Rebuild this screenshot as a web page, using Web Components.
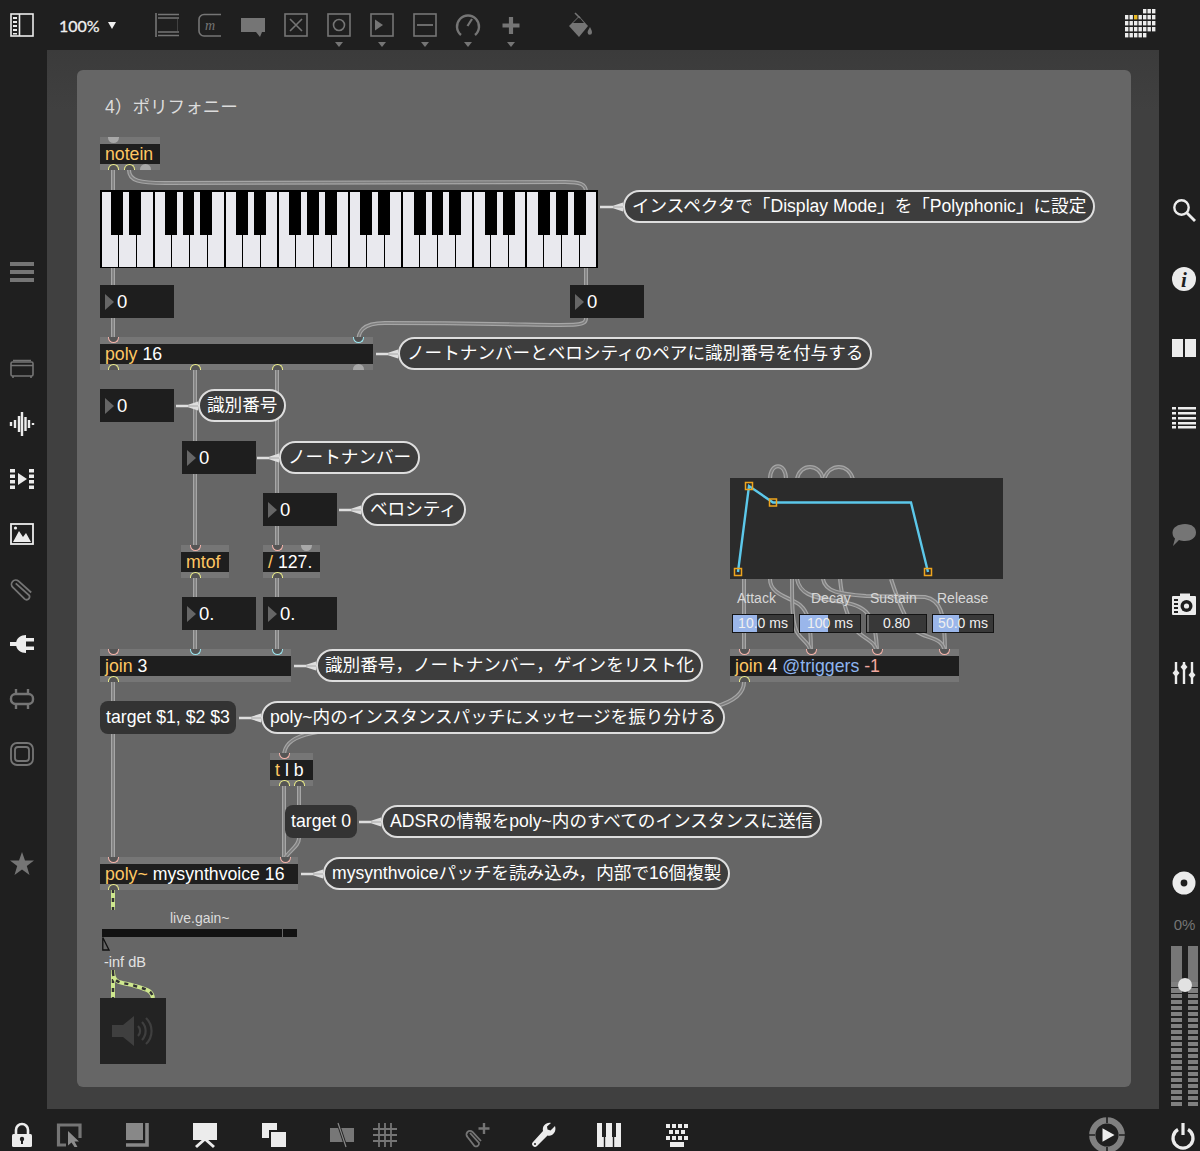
<!DOCTYPE html>
<html lang="ja">
<head>
<meta charset="utf-8">
<title>poly~</title>
<style>
  html, body { margin: 0; padding: 0; background: #1f1f1f; }
  body { font-family: "Liberation Sans", "Noto Sans CJK JP", sans-serif; }
  .attr { color: #8fb6f0; }
  .num { color: #f2a9a0; }
</style>
</head>
<body>

<max-window>
  <tool-strip slot="top" side="top">
    <max-icon name="sidebar" tint="w"></max-icon>
    <zoom-menu value="100%"></zoom-menu>
    <max-icon name="newobj"></max-icon>
    <max-icon name="message"></max-icon>
    <max-icon name="comment"></max-icon>
    <max-icon name="toggle"></max-icon>
    <max-icon name="button" caret></max-icon>
    <max-icon name="number" caret></max-icon>
    <max-icon name="slider" caret></max-icon>
    <max-icon name="dial" caret></max-icon>
    <max-icon name="plus" caret></max-icon>
    <max-icon name="bucket" style="margin-left:26px"></max-icon>
    <max-icon name="gridmap" size="32" tint="w" style="margin-left:auto"></max-icon>
  </tool-strip>

  <tool-strip slot="left" side="left">
    <max-icon name="menu"></max-icon>
    <max-icon name="rack" style="margin-top:42px"></max-icon>
    <max-icon name="wave" tint="w"></max-icon>
    <max-icon name="film" tint="w"></max-icon>
    <max-icon name="image" tint="w"></max-icon>
    <max-icon name="clip"></max-icon>
    <max-icon name="plug" tint="w"></max-icon>
    <max-icon name="bridge"></max-icon>
    <max-icon name="frame"></max-icon>
    <max-icon name="star" style="margin-top:55px"></max-icon>
  </tool-strip>

  <patch-canvas slot="main">
    <patch-wires></patch-wires>

    <patch-label x="105" y="97" size="17.6" color="#dcdcdc">4）ポリフォニー</patch-label>

    <patch-obj x="100" y="137" w="60" name="notein" top="13:g" out="13:y 29:y 45:g"></patch-obj>
    <kbd-slider x="100" y="190" w="498" h="78"></kbd-slider>
    <note-bubble x="600" y="190" tail="23">インスペクタで「Display Mode」を「Polyphonic」に設定</note-bubble>

    <num-box x="100" y="285" value="0"></num-box>
    <num-box x="570" y="285" value="0"></num-box>

    <patch-obj x="100" y="337" w="273" name="poly" top="13:p 258:c" out="13:y 95:y 177:y 258:g">16</patch-obj>
    <note-bubble x="376" y="337" tail="22">ノートナンバーとベロシティのペアに識別番号を付与する</note-bubble>

    <num-box x="100" y="389" value="0"></num-box>
    <note-bubble x="176" y="389" tail="22">識別番号</note-bubble>
    <num-box x="182" y="441" value="0"></num-box>
    <note-bubble x="257" y="441" tail="22">ノートナンバー</note-bubble>
    <num-box x="263" y="493" value="0"></num-box>
    <note-bubble x="339" y="493" tail="22">ベロシティ</note-bubble>

    <patch-obj x="181" y="545" w="48" name="mtof" top="14:p" out="14:y"></patch-obj>
    <patch-obj x="263" y="545" w="57" name="/" top="14:p 43:g" out="14:y">127.</patch-obj>
    <num-box x="182" y="597" value="0."></num-box>
    <num-box x="263" y="597" value="0."></num-box>

    <patch-obj x="100" y="649" w="191" name="join" top="13:p 95:c 177:c" out="13:y">3</patch-obj>
    <note-bubble x="294" y="649" tail="22">識別番号，ノートナンバー，ゲインをリスト化</note-bubble>

    <msg-box x="100" y="701">target $1, $2 $3</msg-box>
    <note-bubble x="239" y="701" tail="22">poly~内のインスタンスパッチにメッセージを振り分ける</note-bubble>

    <patch-obj x="270" y="753" w="43" name="t" top="14:p" out="14:y 29:y">l b</patch-obj>
    <msg-box x="285" y="805">target 0</msg-box>
    <note-bubble x="359" y="805" tail="22">ADSRの情報をpoly~内のすべてのインスタンスに送信</note-bubble>

    <patch-obj x="100" y="857" w="198" name="poly~" top="13:p 185:p" out="13:y">mysynthvoice 16</patch-obj>
    <note-bubble x="301" y="857" tail="22">mysynthvoiceパッチを読み込み，内部で16個複製</note-bubble>

    <adsr-panel x="730" y="478"></adsr-panel>
    <patch-label x="737" y="588" size="14" color="#d8d8d8">Attack</patch-label>
    <patch-label x="811" y="588" size="14" color="#d8d8d8">Decay</patch-label>
    <patch-label x="870" y="588" size="14" color="#d8d8d8">Sustain</patch-label>
    <patch-label x="937" y="588" size="14" color="#d8d8d8">Release</patch-label>
    <live-num x="732" y="614" w="62" fill="24" value="10.0 ms"></live-num>
    <live-num x="799" y="614" w="62" fill="28" value="100 ms"></live-num>
    <live-num x="866" y="614" w="61" fill="2" value="0.80" plain></live-num>
    <live-num x="932" y="614" w="62" fill="26" value="50.0 ms"></live-num>
    <patch-obj x="730" y="649" w="229" name="join" top="14:p 81:p 147:p 214:p" out="14:y">4 <span class="attr">@triggers</span> <span class="num">-1</span></patch-obj>

    <patch-label x="170" y="908" size="14" color="#dcdcdc">live.gain~</patch-label>
    <live-gain x="102" y="929"></live-gain>
    <patch-label x="104" y="952" size="14.5" color="#e2e2e2">-inf dB</patch-label>
    <ez-dac x="100" y="998"></ez-dac>
  </patch-canvas>

  <tool-strip slot="right" side="right">
    <max-icon name="search" tint="w"></max-icon>
    <max-icon name="info" tint="w"></max-icon>
    <max-icon name="book" tint="w"></max-icon>
    <max-icon name="list" tint="w"></max-icon>
    <max-icon name="bubble" style="margin-top:49px"></max-icon>
    <max-icon name="camera" tint="w"></max-icon>
    <max-icon name="sliders" tint="w"></max-icon>
    <max-icon name="disc" tint="w" style="margin-top:141px"></max-icon>
    <audio-meter value="0%"></audio-meter>
  </tool-strip>

  <tool-strip slot="bottom" side="bottom">
    <max-icon name="lock" tint="w"></max-icon>
    <max-icon name="cursor" style="margin-left:23px"></max-icon>
    <max-icon name="layer" style="margin-left:44px"></max-icon>
    <max-icon name="present" tint="w" style="margin-left:44px"></max-icon>
    <max-icon name="windows" tint="w" style="margin-left:45px"></max-icon>
    <max-icon name="crossed" style="margin-left:44px"></max-icon>
    <max-icon name="grid" style="margin-left:19px"></max-icon>
    <max-icon name="clipadd" style="margin-left:69px"></max-icon>
    <max-icon name="wrench" tint="w" style="margin-left:42px"></max-icon>
    <max-icon name="piano" tint="w" style="margin-left:41px"></max-icon>
    <max-icon name="keys" tint="w" style="margin-left:44px"></max-icon>
    <max-icon name="transport" size="36" style="margin-left:400px;margin-top:-6px"></max-icon>
    <max-icon name="power" tint="w" style="margin-left:46px"></max-icon>
  </tool-strip>
</max-window>

<script>
// page coordinates of the patcher card, nodes are written in page coordinates
const CARD_X = 77;
const CARD_Y = 70;

const ICONS = {
  sidebar: `<rect x="1" y="1" width="22" height="22" fill="none" stroke="currentColor" stroke-width="1.6"/><path d="M9.5 1V23" stroke="currentColor" stroke-width="1.6"/><path d="M3 4h4v2H3zM3 8h4v2H3zM3 12h4v2H3zM3 16h4v2H3zM3 20h4v1.5H3z" fill="currentColor"/>`,
  newobj: `<path d="M1 0V24" stroke="currentColor" stroke-width="1.6"/><path d="M3 1.5H24M3 5H24M3 19H24M3 22.5H24" stroke="currentColor" stroke-width="1.6"/><path d="M22.5 6V18" stroke="currentColor" stroke-opacity=".4"/>`,
  message: `<path d="M23 1.5H6a5 5 0 0 0-5 5V18a5 5 0 0 0 5 5H23" fill="none" stroke="currentColor" stroke-width="1.6"/><text x="7" y="17" font-family="Liberation Serif" font-style="italic" font-size="14" fill="currentColor">m</text>`,
  comment: `<path d="M0 5H24V19H21L19 24L15 19H0Z" fill="currentColor"/>`,
  toggle: `<rect x="1" y="1" width="22" height="22" fill="none" stroke="currentColor" stroke-width="1.6"/><path d="M6 6L18 18M18 6L6 18" stroke="currentColor" stroke-width="1.6"/>`,
  button: `<rect x="1" y="1" width="22" height="22" fill="none" stroke="currentColor" stroke-width="1.6"/><circle cx="12" cy="12" r="5.5" fill="none" stroke="currentColor" stroke-width="1.6"/>`,
  number: `<rect x="1" y="1" width="22" height="22" fill="none" stroke="currentColor" stroke-width="1.6"/><path d="M5 6.5L13 12L5 17.5Z" fill="currentColor"/>`,
  slider: `<rect x="1" y="1" width="22" height="22" fill="none" stroke="currentColor" stroke-width="1.6"/><path d="M4 12H20" stroke="currentColor" stroke-width="1.8"/>`,
  dial: `<path d="M5 22A11 11 0 1 1 19 22" fill="none" stroke="currentColor" stroke-width="2.4"/><path d="M11.5 13L16 6" stroke="currentColor" stroke-width="2.2"/>`,
  plus: `<path d="M12 4V21M3.5 12.5H20.5" stroke="currentColor" stroke-width="4.2"/>`,
  bucket: `<path d="M1 13L11 3L20 13L11 24Z" fill="currentColor"/><path d="M5 10L11 4L16 10Z" fill="#1f1f1f"/><path d="M7 0L12 5" stroke="currentColor" stroke-width="1.6"/><path d="M22 14c1.5 3 2 4 2 5.5a2.2 2.2 0 0 1-4.4 0c0-1.5.8-2.5 2.4-5.5Z" fill="currentColor"/>`,
  gridmap: gridDots(),
  menu: `<path d="M0 2H24V6H0ZM0 10H24V14H0ZM0 18H24V22H0Z" fill="currentColor"/>`,
  rack: `<rect x="1" y="5" width="22" height="14" rx="1.5" fill="none" stroke="currentColor" stroke-width="1.6"/><path d="M1 8.5H23M3 3.5H21M3 21V19M21 21V19" stroke="currentColor" stroke-width="1.6"/>`,
  wave: `<path d="M1 10v4M5 8v8M9 4v16M12 0v24M15.5 5v14M19 8v8M23 11v2" stroke="currentColor" stroke-width="2.4"/>`,
  film: `<path d="M0 2h5v3.4H0zM0 7.5h5v3.4H0zM0 13h5v3.4H0zM0 18.5h5v3.4H0zM19 2h5v3.4h-5zM19 7.5h5v3.4h-5zM19 13h5v3.4h-5zM19 18.5h5v3.4h-5z" fill="currentColor"/><path d="M8 6L17 12L8 18Z" fill="currentColor"/>`,
  image: `<rect x="1" y="2" width="22" height="20" fill="none" stroke="currentColor" stroke-width="1.8"/><circle cx="5.5" cy="6" r="1.6" fill="currentColor"/><path d="M3 20L9 9L13 15L16 11L21 20Z" fill="currentColor"/>`,
  clip: `<path d="M6 6L19 19a3 3 0 0 1-5 3L3 10a4 4 0 0 1 6-6L21 16" transform="rotate(-3 12 12)" fill="none" stroke="currentColor" stroke-width="1.8"/>`,
  plug: `<path d="M0 10H7V14H0Z M6 12C6 6 11 3 16 3V21C11 21 6 18 6 12Z M16 6H24V9.5H16Z M16 14.5H24V18H16Z" fill="currentColor"/>`,
  bridge: `<rect x="1" y="7" width="22" height="10" rx="4.5" fill="none" stroke="currentColor" stroke-width="2.4"/><path d="M6 2V7M18 2V7M6 17V22M18 17V22" stroke="currentColor" stroke-width="2.4"/>`,
  frame: `<rect x="1" y="1" width="22" height="22" rx="6" fill="none" stroke="currentColor" stroke-width="1.8"/><rect x="5" y="5" width="14" height="14" rx="3" fill="none" stroke="currentColor" stroke-width="1.8"/>`,
  star: `<path d="M12 0L15 8.5H24L16.8 14L19.5 23L12 17.5L4.5 23L7.2 14L0 8.5H9Z" fill="currentColor"/>`,
  search: `<circle cx="9.5" cy="9.5" r="7.2" fill="none" stroke="currentColor" stroke-width="2.4"/><path d="M15 15L23 23" stroke="currentColor" stroke-width="2.8"/>`,
  info: `<circle cx="12" cy="12" r="12" fill="currentColor"/><text x="12" y="19.5" text-anchor="middle" font-family="Liberation Serif" font-style="italic" font-weight="700" font-size="21" fill="#1f1f1f">i</text>`,
  book: `<path d="M0 3H11V21H0ZM13 3H24V21H13Z" fill="currentColor"/>`,
  list: `<path d="M0 2h4v2.5H0zM0 7h4v2.5H0zM0 12h4v2.5H0zM0 17h4v2.5H0zM0 21h4v2.5H0zM6 2h18v2.5H6zM6 7h18v2.5H6zM6 12h18v2.5H6zM6 17h18v2.5H6zM6 21h18v2.5H6z" fill="currentColor"/>`,
  bubble: `<path d="M13 1C20 1 24 4.5 24 9.5C24 15 19 18 13 18C11 18 9 17.8 7 17L1 23L3 15.5C1 14 .5 11.5 .5 9.5C.5 4.5 6 1 13 1Z" fill="currentColor"/>`,
  camera: `<path d="M5 4H8V1.5H18V4H23a1 1 0 0 1 1 1V22a1 1 0 0 1-1 1H1a1 1 0 0 1-1-1V5a1 1 0 0 1 1-1Z" fill="currentColor"/><circle cx="14.5" cy="14" r="6" fill="#1f1f1f"/><circle cx="14.5" cy="14" r="2.6" fill="currentColor"/><path d="M2 7h4v2H2zM2 11h4v2H2zM2 15h4v2H2zM2 19h4v2H2z" fill="#1f1f1f"/>`,
  sliders: `<path d="M4 1V23M12 1V23M20 1V23" stroke="currentColor" stroke-width="2.4"/><path d="M4 8L7.5 12L4 16L.5 12ZM12 2L15.5 6L12 10L8.5 6ZM20 10L23.5 14L20 18L16.5 14Z" fill="currentColor"/>`,
  disc: `<circle cx="12" cy="12" r="11.5" fill="currentColor"/><circle cx="12" cy="12" r="3.4" fill="#1f1f1f"/>`,
  lock: `<path d="M6 11V7a6 6 0 0 1 12 0v4" fill="none" stroke="currentColor" stroke-width="2.6"/><rect x="2" y="11" width="20" height="13" rx="1.5" fill="currentColor"/><circle cx="12" cy="16" r="2.2" fill="#1f1f1f"/><path d="M11 17H13V21H11Z" fill="#1f1f1f"/>`,
  cursor: `<path d="M23 15V2H1.5V22H9" fill="none" stroke="currentColor" stroke-width="3.2"/><path d="M11 8L22 18.5H17.5L20.5 24H17.5L14.5 19.5L11 22.5Z" fill="#8c8c8c"/>`,
  layer: `<path d="M1 0H18V17H1Z" fill="#888"/><path d="M22 0V22H1" fill="none" stroke="#888" stroke-width="3.6"/>`,
  present: `<path d="M0 0H24V17H0Z" fill="currentColor"/><path d="M12 16L3 24M12 16L21 24" stroke="currentColor" stroke-width="3"/>`,
  windows: `<rect x="0" y="0" width="15" height="15" fill="currentColor"/><rect x="7" y="7" width="17" height="17" fill="#1f1f1f"/><rect x="9" y="9" width="15" height="15" fill="currentColor"/>`,
  crossed: `<path d="M0 5H24V19H0Z" fill="#777"/><path d="M8 0L16 24" stroke="#1f1f1f" stroke-width="3"/><path d="M8 0L16 24" stroke="#888" stroke-width="1.2"/>`,
  grid: `<path d="M6 0V24M12 0V24M18 0V24M0 6H24M0 12H24M0 18H24" stroke="currentColor" stroke-width="1.8"/>`,
  clipadd: `<path d="M4 10L13 20a3 3 0 0 1-4.5 3L1.5 14a3.5 3.5 0 0 1 5-5L15 18" fill="none" stroke="currentColor" stroke-width="1.8"/><path d="M18 0V11M12.5 5.5H23.5" stroke="currentColor" stroke-width="2.4"/>`,
  wrench: `<path d="M23 3L18.5 7.5L15.5 6.5L15 3.5L19 0C14 -1 10 3 11 8L1 19a2.8 2.8 0 0 0 4 4L15.5 12.5C20 14 25 9 23 3Z" fill="currentColor"/><circle cx="3" cy="21" r="1" fill="#1f1f1f"/>`,
  piano: `<path d="M0 0H24V24H0Z" fill="currentColor"/><path d="M5 0H9V14H5ZM15 0H19V14H15Z" fill="#1f1f1f"/><path d="M7.5 14V24M16.5 14V24" stroke="#1f1f1f" stroke-width="1.4"/>`,
  keys: `<path d="M1 1h4v4H1zM7 1h4v4H7zM13 1h4v4h-4zM19 1h4v4h-4zM4 7h4v4H4zM10 7h4v4h-4zM16 7h4v4h-4zM1 13h4v4H1zM7 13h4v4H7zM13 13h4v4h-4zM19 13h4v4h-4zM5 19h14v5H5z" fill="currentColor"/>`,
  transport: `<circle cx="12" cy="12" r="9.8" fill="none" stroke="#808080" stroke-width="4.2"/><path d="M12 0V4M12 20V24M0 12H4M20 12H24" stroke="#1f1f1f" stroke-width="1.1"/><path d="M9 7.5L17 12L9 16.5Z" fill="#eee"/>`,
  power: `<path d="M7 6.5a10 10 0 1 0 10 0" fill="none" stroke="currentColor" stroke-width="3.2"/><path d="M12 0V12" stroke="currentColor" stroke-width="3.2"/>`
};

// the mixer style dots in the top right corner, one of them is yellow
function gridDots() {
  const rows = [[4, 7], [0, 7], [0, 7], [0, 7], [0, 5]];
  let out = "";
  rows.forEach((r, row) => {
    for (let c = r[0]; c < r[1]; c++) {
      const yellow = row === 1 && c === 2;
      out += `<rect x="${c * 4.5}" y="${row * 6}" width="3.4" height="4.4" fill="${yellow ? "#e8b820" : "currentColor"}"/>`;
    }
  });
  return out;
}

class MaxWindow extends HTMLElement {
  constructor() {
    super();
    this.shadowDOM = this.attachShadow({mode: "open"});
  }
  connectedCallback() {
    this.shadowDOM.innerHTML = `
    <style>
      :host {
        display: grid;
        grid-template-columns: 47px 1112px 41px;
        grid-template-rows: 50px 1059px 42px;
        grid-template-areas: "top top top" "left main right" "bottom bottom bottom";
        width: 1200px;
        height: 1151px;
        background: #1f1f1f;
        overflow: hidden;
      }
      ::slotted([slot="top"]) { grid-area: top; }
      ::slotted([slot="left"]) { grid-area: left; }
      ::slotted([slot="main"]) { grid-area: main; }
      ::slotted([slot="right"]) { grid-area: right; }
      ::slotted([slot="bottom"]) { grid-area: bottom; }
    </style>
    <slot name="top"></slot>
    <slot name="left"></slot>
    <slot name="main"></slot>
    <slot name="right"></slot>
    <slot name="bottom"></slot>
    `;
  }
}

class ToolStrip extends HTMLElement {
  constructor() {
    super();
    this.shadowDOM = this.attachShadow({mode: "open"});
  }
  connectedCallback() {
    this.shadowDOM.innerHTML = `
    <style>
      :host {
        display: flex;
        box-sizing: border-box;
        height: 100%;
      }
      :host([side="top"]) { align-items: center; gap: 19px; padding: 0 43px 0 10px; }
      :host([side="left"]) { flex-direction: column; gap: 31px; padding: 210px 0 0 10px; }
      :host([side="right"]) { flex-direction: column; gap: 45px; padding: 148px 0 0 13px; }
      :host([side="bottom"]) { padding: 14px 0 0 10px; align-items: flex-start; }
    </style>
    <slot></slot>
    `;
  }
}

class MaxIcon extends HTMLElement {
  constructor() {
    super();
    this.shadowDOM = this.attachShadow({mode: "open"});
  }
  connectedCallback() {
    const size = this.getAttribute("size") || 24;
    const box = this.getAttribute("name") === "gridmap" ? "0 0 32 32" : "0 0 24 24";
    const color = this.getAttribute("tint") === "w" ? "#ececec" : "#757575";
    this.shadowDOM.innerHTML = `
    <style>
      :host {
        display: block;
        position: relative;
        flex: none;
        width: ${size}px;
        height: ${size}px;
        color: ${color};
      }
      svg { display: block; overflow: visible; }
      .caret {
        position: absolute;
        left: 7.5px;
        top: 28.5px;
        width: 0;
        height: 0;
        border: 4.5px solid transparent;
        border-bottom: 0;
        border-top: 5px solid #757575;
      }
    </style>
    <svg width="${size}" height="${size}" viewBox="${box}">${ICONS[this.getAttribute("name")]}</svg>
    ${this.hasAttribute("caret") ? '<div class="caret"></div>' : ""}
    `;
  }
}

class ZoomMenu extends HTMLElement {
  constructor() {
    super();
    this.shadowDOM = this.attachShadow({mode: "open"});
  }
  connectedCallback() {
    this.shadowDOM.innerHTML = `
    <style>
      :host {
        display: flex;
        align-items: center;
        gap: 8px;
        width: 77px;
        margin-left: 6px;
        color: #f0f0f0;
        font: 16px "Lato", "Liberation Sans", sans-serif;
        -webkit-text-stroke: .3px #f0f0f0;
      }
      i { width: 0; height: 0; border: 4.5px solid transparent; border-bottom: 0; border-top: 7px solid #f0f0f0; }
    </style>
    <span>${this.getAttribute("value")}</span><i></i>
    `;
  }
}

class PatchCanvas extends HTMLElement {
  constructor() {
    super();
    this.shadowDOM = this.attachShadow({mode: "open"});
  }
  connectedCallback() {
    this.shadowDOM.innerHTML = `
    <style>
      :host {
        display: block;
        box-sizing: border-box;
        height: 100%;
        padding: 20px 28px 22px 30px;
        background: linear-gradient(#3b3b3b, #404040 60px);
      }
      .card {
        position: relative;
        height: 100%;
        background: #666;
        border-radius: 6px;
        font: 17.7px "Liberation Sans", "Noto Sans CJK JP", sans-serif;
        color: #fff;
      }
    </style>
    <div class="card"><slot></slot></div>
    `;
  }
}

// wires sit below every object of the patch
class PatchWires extends HTMLElement {
  constructor() {
    super();
    this.shadowDOM = this.attachShadow({mode: "open"});
  }
  connectedCallback() {
    const wires = [
      "M113 170V343",
      "M129 170C129 181 140 183 165 183L565 182C580 182 586 184 586 192V285",
      "M586 318C586 330 570 323 385 323C362 323 358 332 358 343",
      "M195 370V551", "M195 578V655",
      "M277 370V551", "M277 578V655",
      "M113 682V863",
      "M744 682C744 706 700 712 650 716L380 726C310 730 284 735 284 756",
      "M284 786V863", "M299 786V805", "M299 838C299 846 290 850 285 858",
      "M744 579V655",
      "M770 479C770 462 786 462 786 479", "M797 479C800 463 820 463 823 479", "M824 479C830 463 848 463 853 479",
      "M770 579C770 595 790 597 800 605C808 612 811 620 811 655",
      "M792 579C792 600 792 620 796 630C800 640 811 642 811 655",
      "M797 579C800 595 815 597 830 600C860 605 877 605 877 655",
      "M840 579C842 600 848 620 856 630C864 640 877 640 877 655",
      "M823 579C825 592 840 594 866 596L925 597C940 600 945 610 945 655",
      "M891 579C898 600 905 620 915 630C925 640 945 635 945 655"
    ];
    const signals = [
      "M113 889V910",
      "M113 970V998",
      "M113 972C113 985 125 982 135 986C150 990 152 992 153 998"
    ];
    const strand = (d, css) => `<path d="${d}" style="${css}"/>`;
    this.shadowDOM.innerHTML = `
    <style>
      :host { position: absolute; inset: 0; display: block; }
      svg { display: block; width: 100%; height: 100%; }
      path { fill: none; }
    </style>
    <svg viewBox="${CARD_X} ${CARD_Y} 1054 1017">
      ${wires.map(d => strand(d, "stroke:#a6a6a6;stroke-width:4") + strand(d, "stroke:#7d7d7d;stroke-width:1.6")).join("")}
      ${signals.map(d => strand(d, "stroke:#cfe88e;stroke-width:4") + strand(d, "stroke:#333;stroke-width:2.5;stroke-dasharray:4 5")).join("")}
    </svg>
    `;
  }
}

// base of everything placed on the free canvas of the patch
class PatchNode extends HTMLElement {
  constructor() {
    super();
    this.shadowDOM = this.attachShadow({mode: "open"});
  }
  connectedCallback() {
    this.render();
  }
  num(name, fallback) {
    return this.hasAttribute(name) ? Number(this.getAttribute(name)) : fallback;
  }
  place() {
    return `position: absolute; left: ${this.num("x") - CARD_X}px; top: ${this.num("y") - CARD_Y}px;`;
  }
}

class PatchLabel extends PatchNode {
  render() {
    this.shadowDOM.innerHTML = `
    <style>
      :host {
        ${this.place()}
        display: block;
        white-space: nowrap;
        font-size: ${this.num("size", 14)}px;
        line-height: 20px;
        color: ${this.getAttribute("color")};
      }
    </style>
    <slot></slot>
    `;
  }
}

class PatchObj extends PatchNode {
  ports(list, css) {
    if (!list) return "";
    return list.split(" ").map(p => {
      const [pos, kind] = p.split(":");
      return `<i class="${css} ${kind}" style="left:${Number(pos) - 5}px"></i>`;
    }).join("");
  }
  render() {
    this.shadowDOM.innerHTML = `
    <style>
      :host {
        ${this.place()}
        display: block;
        box-sizing: border-box;
        width: ${this.num("w")}px;
        height: 33px;
        padding: 6.5px 0;
        background: #767676;
      }
      .box {
        display: flex;
        gap: 5px;
        height: 20px;
        padding-left: 5px;
        background: #1e1e1e;
        color: #fff;
        font-size: 17.7px;
        line-height: 20px;
        white-space: nowrap;
      }
      b { font-weight: 400; color: #ffc763; }
      i { position: absolute; box-sizing: border-box; width: 11px; height: 6px; background: #555; }
      .in { top: 0; border: 1.8px solid #f5b3aa; border-top: 0; border-radius: 0 0 6px 6px; }
      .in.c { border-color: #9be6f0; }
      .out { bottom: 0; border: 1.8px solid #eef08a; border-bottom: 0; border-radius: 6px 6px 0 0; }
      .in.g { border: 0; background: #a8a8a8; }
      .out.g { border: 0; background: #a8a8a8; }
    </style>
    ${this.ports(this.getAttribute("top"), "in")}
    <div class="box"><b>${this.getAttribute("name")}</b><span><slot></slot></span></div>
    ${this.ports(this.getAttribute("out"), "out")}
    `;
  }
}

class NumBox extends PatchNode {
  render() {
    this.shadowDOM.innerHTML = `
    <style>
      :host {
        ${this.place()}
        display: flex;
        align-items: center;
        box-sizing: border-box;
        width: 74px;
        height: 33px;
        padding: 1px 0 0 5px;
        background: #1e1e1e;
        color: #fff;
        font-size: 18.5px;
      }
      i { width: 0; height: 0; margin-right: 3px; border: 8.5px solid transparent; border-right: 0; border-left: 9px solid #666; }
    </style>
    <i></i><span>${this.getAttribute("value")}</span>
    `;
  }
}

class MsgBox extends PatchNode {
  render() {
    this.shadowDOM.innerHTML = `
    <style>
      :host {
        ${this.place()}
        display: block;
        height: 33px;
        padding: 0 6px;
        border-radius: 8px;
        background: #333;
        color: #fff;
        font-size: 17.7px;
        line-height: 33px;
        white-space: nowrap;
      }
    </style>
    <slot></slot>
    `;
  }
}

class NoteBubble extends PatchNode {
  render() {
    const tail = this.num("tail", 22);
    this.shadowDOM.innerHTML = `
    <style>
      :host {
        ${this.place()}
        display: flex;
        align-items: center;
        height: 33px;
        white-space: nowrap;
      }
      svg { display: block; flex: none; }
      .text {
        box-sizing: border-box;
        height: 33px;
        padding: 0 7px;
        border: 2px solid #dedede;
        border-radius: 16.5px;
        background: #3d3d3d;
        color: #fff;
        font-size: 17.6px;
        line-height: 29px;
      }
    </style>
    <svg width="${tail}" height="10" viewBox="0 0 ${tail} 10"><path d="M0 3.8H${tail - 10}L${tail} 0.5V9.5L${tail - 10} 6.2H0Z" fill="#dedede"/><path d="M${tail - 10} 5H${tail}" stroke="#9a9a9a" stroke-width=".8"/></svg>
    <div class="text"><slot></slot></div>
    `;
  }
}

class KbdSlider extends PatchNode {
  render() {
    const whites = 28;
    const pitch = this.num("w") / whites;
    let blacks = "";
    for (let i = 0; i < whites - 1; i++) {
      if ([0, 1, 3, 4, 5].includes(i % 7)) {
        blacks += `<i style="left:${(i + 1) * pitch - 6.3}px"></i>`;
      }
    }
    this.shadowDOM.innerHTML = `
    <style>
      :host {
        ${this.place()}
        display: flex;
        box-sizing: border-box;
        width: ${this.num("w")}px;
        height: ${this.num("h")}px;
        gap: 1.3px;
        padding: 1.5px;
        background: #000;
      }
      b { flex: 1; background: #e9e9ee; }
      i { position: absolute; top: 0; width: 11.8px; height: 45px; background: #000; }
    </style>
    ${"<b></b>".repeat(whites)}
    ${blacks}
    `;
  }
}

class AdsrPanel extends PatchNode {
  render() {
    const pts = [[8, 94], [19, 8], [43, 24.5], [181, 24.5], [198, 94]];
    this.shadowDOM.innerHTML = `
    <style>
      :host {
        ${this.place()}
        display: block;
        width: 273px;
        height: 101px;
        background: #2b2b2b;
      }
      svg { display: block; overflow: visible; }
    </style>
    <svg width="273" height="101">
      <polyline points="${pts.map(p => p.join(",")).join(" ")}" fill="none" stroke="#5cc8ea" stroke-width="2.4"/>
      ${pts.filter(p => p[0] !== 181).map(p => `<rect x="${p[0] - 3.5}" y="${p[1] - 3.5}" width="7" height="7" fill="none" stroke="#eea51e" stroke-width="1.5"/>`).join("")}
    </svg>
    `;
  }
}

class LiveNum extends PatchNode {
  render() {
    this.shadowDOM.innerHTML = `
    <style>
      :host {
        ${this.place()}
        display: block;
        box-sizing: border-box;
        width: ${this.num("w")}px;
        height: 19px;
        border: 1.5px solid #141414;
        background: #383838;
        color: #f0f0f0;
        font-size: 14px;
        line-height: 16px;
        text-align: center;
        overflow: hidden;
      }
      i { position: absolute; left: 0; top: 0; bottom: 0; width: ${this.num("fill")}px; background: ${this.hasAttribute("plain") ? "#6b6b6b" : "#9ab6ea"}; }
      span { position: relative; }
    </style>
    <i></i><span>${this.getAttribute("value")}</span>
    `;
  }
}

class LiveGain extends PatchNode {
  render() {
    this.shadowDOM.innerHTML = `
    <style>
      :host {
        ${this.place()}
        display: flex;
        gap: 1px;
        width: 195px;
        height: 8px;
      }
      b { height: 8px; background: #121212; }
      svg { position: absolute; left: 0; top: 8px; }
    </style>
    <b style="width:180px"></b><b style="flex:1"></b>
    <svg width="8" height="14"><path d="M.8 .5L7 13H.8Z" fill="#666" stroke="#111" stroke-width="1.3"/></svg>
    `;
  }
}

class EzDac extends PatchNode {
  render() {
    this.shadowDOM.innerHTML = `
    <style>
      :host {
        ${this.place()}
        display: flex;
        align-items: center;
        justify-content: center;
        width: 66px;
        height: 66px;
        background: #232323;
      }
    </style>
    <svg width="44" height="32" viewBox="0 0 44 32">
      <path d="M1 10H12L23 1V31L12 22H1Z" fill="#3f3f3f"/>
      <path d="M27 11a7 7 0 0 1 0 10M31 7a13 13 0 0 1 0 18M35 3a18 18 0 0 1 0 26" fill="none" stroke="#3f3f3f" stroke-width="2.2"/>
    </svg>
    `;
  }
}

class AudioMeter extends HTMLElement {
  constructor() {
    super();
    this.shadowDOM = this.attachShadow({mode: "open"});
  }
  connectedCallback() {
    this.shadowDOM.innerHTML = `
    <style>
      :host {
        display: block;
        position: relative;
        margin: -23px 0 0 -1px;
        width: 27px;
        color: #757575;
        font: 15px "Liberation Sans", sans-serif;
        text-align: center;
      }
      .level { height: 16px; line-height: 16px; white-space: nowrap; }
      .bars { display: flex; gap: 6px; margin-top: 13px; }
      .bar { flex: 1; height: 160px; }
      .bar::before { content: ""; display: block; height: 36px; background: #777; }
      .bar::after {
        content: "";
        display: block;
        height: 124px;
        background: repeating-linear-gradient(#808080 0 4.5px, #1f1f1f 4.5px 6px);
      }
      .knob {
        position: absolute;
        left: 6.5px;
        top: 61px;
        width: 14px;
        height: 14px;
        border-radius: 50%;
        background: #e2e2e2;
      }
    </style>
    <div class="level">${this.getAttribute("value")}</div>
    <div class="bars"><div class="bar"></div><div class="bar"></div></div>
    <div class="knob"></div>
    `;
  }
}

customElements.define("max-window", MaxWindow);
customElements.define("tool-strip", ToolStrip);
customElements.define("max-icon", MaxIcon);
customElements.define("zoom-menu", ZoomMenu);
customElements.define("patch-canvas", PatchCanvas);
customElements.define("patch-wires", PatchWires);
customElements.define("patch-label", PatchLabel);
customElements.define("patch-obj", PatchObj);
customElements.define("num-box", NumBox);
customElements.define("msg-box", MsgBox);
customElements.define("note-bubble", NoteBubble);
customElements.define("kbd-slider", KbdSlider);
customElements.define("adsr-panel", AdsrPanel);
customElements.define("live-num", LiveNum);
customElements.define("live-gain", LiveGain);
customElements.define("ez-dac", EzDac);
customElements.define("audio-meter", AudioMeter);
</script>
</body>
</html>
